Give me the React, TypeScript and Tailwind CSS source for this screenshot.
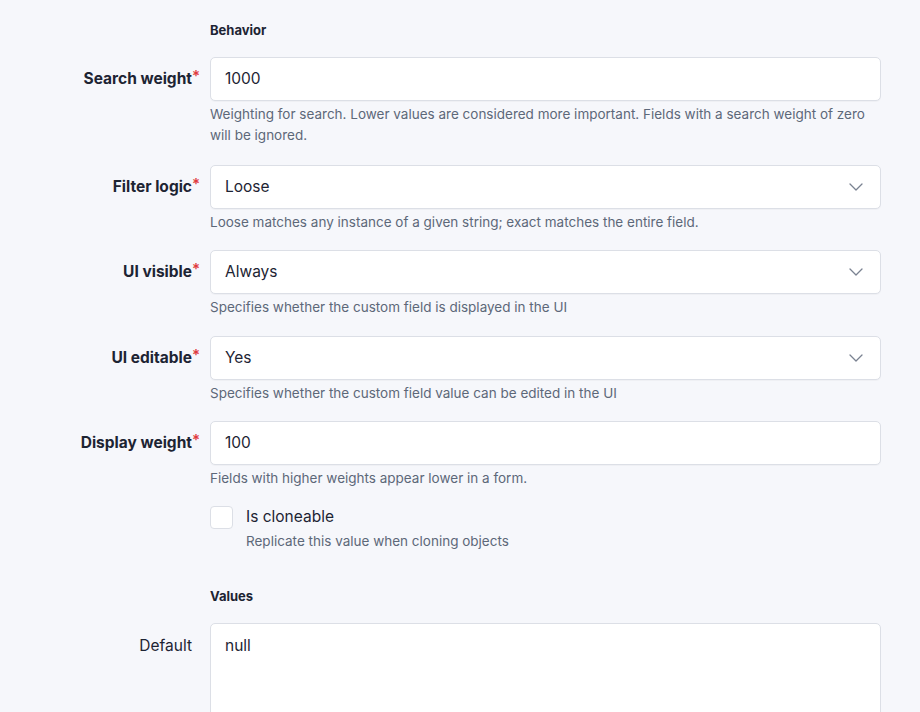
import React from "react";

const font = { fontFamily: "Inter, 'Noto Sans', sans-serif" };

function Label({ text, required }: { text: string; required?: boolean }) {
  return (
    <div className="w-[192px] shrink-0 flex justify-end">
      <span className="relative text-[15.5px] font-bold text-[#1d2433] leading-[44px]">
        {text}
        {required && (
          <span className="absolute left-full top-[-3px] text-[#e0393e] text-[15px] font-semibold">*</span>
        )}
      </span>
    </div>
  );
}

function Chevron() {
  return (
    <svg width="14" height="8" viewBox="0 0 14 8" fill="none" className="text-[#7a8291]">
      <path d="M1 1l6 6 6-6" stroke="currentColor" strokeWidth="1.3" strokeLinecap="round" strokeLinejoin="round" />
    </svg>
  );
}

function Field({
  label,
  required,
  value,
  select,
  help,
  gap = "mb-[17px]",
}: {
  label: string;
  required?: boolean;
  value: string;
  select?: boolean;
  help: string;
  gap?: string;
}) {
  return (
    <div className={`flex gap-[18px] ${gap}`}>
      <Label text={label} required={required} />
      <div className="flex-1">
        <div className="h-[44px] bg-white border border-[#dcdfe6] rounded-[5px] flex items-center pl-[14px] pr-[17px] justify-between shadow-[0_1px_1px_rgba(0,0,0,0.03)]">
          <span className="text-[15.5px] text-[#1d2433]">{value}</span>
          {select && <Chevron />}
        </div>
        <p className="mt-[3px] text-[13.5px] leading-[21px] text-[#5d6879]">{help}</p>
      </div>
    </div>
  );
}

export default function App() {
  return (
    <div className="min-h-[712px] w-[920px] bg-[#f6f7fb] pr-[39px]" style={font}>
      <div className="pt-[20px]">
        <div className="flex gap-[18px] mb-[17px]">
          <div className="w-[192px] shrink-0" />
          <div className="text-[13px] font-bold text-[#1d2433] leading-[20px]">Behavior</div>
        </div>
        <Field
          label="Search weight"
          required
          value="1000"
          gap="mb-[19px]"
          help="Weighting for search. Lower values are considered more important. Fields with a search weight of zero will be ignored."
        />
        <Field
          label="Filter logic"
          required
          value="Loose"
          select
          help="Loose matches any instance of a given string; exact matches the entire field."
        />
        <Field
          label="UI visible"
          required
          value="Always"
          select
          gap="mb-[18px]"
          help="Specifies whether the custom field is displayed in the UI"
        />
        <Field
          label="UI editable"
          required
          value="Yes"
          select
          help="Specifies whether the custom field value can be edited in the UI"
        />
        <Field
          label="Display weight"
          required
          value="100"
          help="Fields with higher weights appear lower in a form."
        />
        <div className="flex gap-[18px] mt-[1px]">
          <div className="w-[192px] shrink-0" />
          <div className="flex gap-[13px]">
            <div className="w-[23px] h-[23px] bg-white border border-[#dcdfe6] rounded-[4px] shrink-0" />
            <div>
              <div className="text-[15.5px] leading-[20px] text-[#1d2433] mt-[1px]">Is cloneable</div>
              <div className="text-[13.5px] leading-[20px] text-[#5d6879] mt-[4px]">Replicate this value when cloning objects</div>
            </div>
          </div>
        </div>
        <div className="flex gap-[18px] mt-[35px] mb-[17px]">
          <div className="w-[192px] shrink-0" />
          <div className="text-[13px] font-bold text-[#1d2433] leading-[20px]">Values</div>
        </div>
        <div className="flex gap-[18px]">
          <div className="w-[192px] shrink-0 flex justify-end pt-[12px]">
            <span className="text-[15.5px] text-[#1d2433] leading-[22px]">Default</span>
          </div>
          <div className="flex-1 h-[120px] bg-white border border-[#dcdfe6] rounded-[5px] pl-[14px] pt-[9px]">
            <span className="text-[15.5px] text-[#1d2433] leading-[22px]">null</span>
          </div>
        </div>
      </div>
    </div>
  );
}
